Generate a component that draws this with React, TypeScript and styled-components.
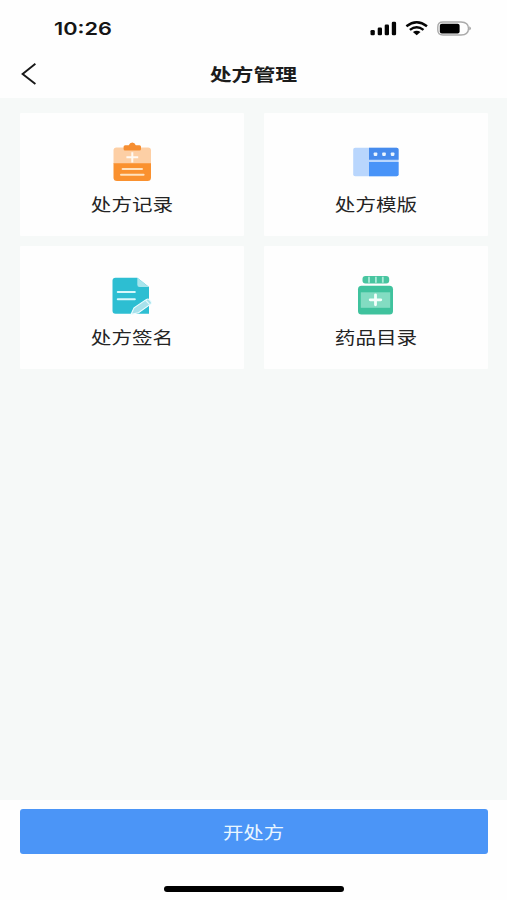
import React from "react";
import styled, { createGlobalStyle } from "styled-components";

const GlobalStyle = createGlobalStyle`
  * { box-sizing: border-box; }
  body { margin: 0; background: #fefefe; }
`;

const Screen = styled.div`
  width: 507px;
  height: 900px;
  display: flex;
  flex-direction: column;
  overflow: hidden;
  background: #fefefe;
  color: #242424;
  font-family: "Noto Sans CJK SC", sans-serif;
`;

const StatusBar = styled.header`
  height: 50px;
  display: flex;
  align-items: center;
  justify-content: space-between;
  padding: 8px 33px 0 54px;
`;

const Time = styled.span`
  font: 600 17.5px/24px Inter, sans-serif;
  color: #151515;
  transform: scaleX(1.24);
  transform-origin: left center;
`;

const NavBar = styled.nav`
  height: 48px;
  display: grid;
  grid-template-columns: 58px 1fr 58px;
  align-items: center;
`;

const BackButton = styled.button`
  width: 58px;
  height: 48px;
  padding: 0;
  border: 0;
  background: none;
  svg { display: block; }
`;

const Title = styled.h1`
  margin: 0;
  text-align: center;
  font-size: 17.5px;
  line-height: 48px;
  font-weight: 700;
  color: #1c1c1c;
  transform: scaleX(1.25);
`;

const Content = styled.main`
  flex: 1;
  display: grid;
  grid-template-columns: 224px 224px;
  grid-auto-rows: 123px;
  align-content: start;
  gap: 10px 20px;
  padding: 15px 20px 0;
  background: #f6f9f8;
`;

const Card = styled.section`
  display: flex;
  flex-direction: column;
  align-items: center;
  padding-top: 27px;
  border-radius: 1px;
  background: #fefefe;
  svg { display: block; flex: none; }
`;

const Label = styled.span`
  margin-top: 6px;
  font-size: 17px;
  line-height: 28px;
  font-weight: 400;
  transform: scaleX(1.21);
`;

const Footer = styled.footer`
  height: 100px;
  display: flex;
  flex-direction: column;
  align-items: center;
  padding-top: 9px;
`;

const PrimaryButton = styled.button`
  width: 468px;
  height: 45px;
  padding: 0;
  border: 0;
  border-radius: 3px;
  background: #4b95f7;
  color: #e9f6ff;
  font: 400 17px/45px "Noto Sans CJK SC", sans-serif;
`;

const ButtonText = styled.span`
  display: inline-block;
  transform: scaleX(1.2);
`;

const HomeBar = styled.div`
  width: 180px;
  height: 6px;
  margin-top: 31.5px;
  border-radius: 3px;
  background: #000;
`;

const StatusIcons = () => (
  <svg width="104" height="20" viewBox="0 0 104 20">
    <g fill="#050505">
      <rect x="0.5" y="11" width="4.3" height="5.2" rx="1.3" />
      <rect x="7.7" y="8.5" width="4.3" height="7.7" rx="1.3" />
      <rect x="14.7" y="5.5" width="4.3" height="10.7" rx="1.3" />
      <rect x="21.8" y="2.8" width="4.3" height="13.4" rx="1.3" />
      <path d="M46.7 16.3 42.9 13.1Q46.7 10.2 50.5 13.1Z" />
    </g>
    <g fill="none" stroke="#050505" strokeWidth="2.4">
      <path d="M36.4 7.2Q46.7-.8 57 7.2" />
      <path d="M39.9 10.9Q46.7 5.4 53.5 10.9" />
    </g>
    <path d="M73 3H91Q98.5 3.2 98.5 9.4T91 16H73Q67.8 16 67.8 11V8Q67.8 3 73 3Z" fill="#fefefe" stroke="#aaa" strokeWidth="1.4" />
    <rect x="69.8" y="4.8" width="19.8" height="9.6" rx="2" fill="#000" />
    <path d="M99.2 7.2Q103 9.4 99.2 11.6Z" fill="#aaa" />
  </svg>
);

const BackIcon = () => (
  <svg width="58" height="48" viewBox="0 0 58 48">
    <path d="M35.4 13.8 22.6 24 35.4 34" fill="none" stroke="#181818" strokeWidth="1.9" />
  </svg>
);

const RecordIcon = () => (
  <svg width="48" height="44" viewBox="0 0 48 44">
    <path d="M8.5 7.4H40Q43 7.4 43 10.5V24H5.5V10.5Q5.5 7.4 8.5 7.4Z" fill="#fdcfa5" />
    <path d="M5.5 23.3H43V37.5Q43 41 39.5 41H9Q5.5 41 5.5 37.5Z" fill="#fa912f" />
    <path d="M17.2 5.2H20.8Q21.8 2.4 24.3 2.4T27.8 5.2H31.5Q33 5.2 33 6.7V9Q33 10.6 31.5 10.6H17Q15.6 10.6 15.6 9V6.7Q15.6 5.2 17.2 5.2Z" fill="#f68e31" />
    <path d="M24.3 12.2V22.5M18.4 17.3H30.2" stroke="#fff9f2" strokeWidth="2" />
    <path d="M14.6 29H34M13 34.8H35.6" stroke="#ffe2bf" strokeWidth="2" strokeLinecap="round" />
  </svg>
);

const TemplateIcon = () => (
  <svg width="48" height="44" viewBox="0 0 48 44">
    <rect x="1.2" y="7.8" width="45.4" height="28.4" rx="2" fill="#b9d6fd" />
    <path d="M17 7.8H44.6Q46.6 7.8 46.6 9.8V19.8H17Z" fill="#468bed" />
    <path d="M17 22H46.6V34.2Q46.6 36.2 44.6 36.2H17Z" fill="#4893f8" />
    <g fill="#eaf5ff">
      <rect x="21.7" y="12.5" width="3.6" height="3.4" rx="0.8" />
      <rect x="30.2" y="12.5" width="3.6" height="3.4" rx="0.8" />
      <rect x="38.8" y="12.5" width="3.6" height="3.4" rx="0.8" />
    </g>
  </svg>
);

const SignatureIcon = () => (
  <svg width="48" height="44" viewBox="0 0 48 44">
    <path d="M7.5 4.8H29.3L41 14V40.8H7.5Q4.5 40.8 4.5 37.8V7.8Q4.5 4.8 7.5 4.8Z" fill="#2dbed2" />
    <path d="M29.3 4.8 41 14H31.5Q29.3 14 29.3 11.8Z" fill="#a8e5ec" />
    <path d="M9.8 19H26.8M9.8 26.2H26.8" stroke="#d8f8fb" strokeWidth="2.1" strokeLinecap="round" />
    <path d="M23 41.4 26 34.8 38.5 26.4Q40.6 25.2 42.6 27.8T42.3 31.4L30.5 39.8Z" fill="#a7e1eb" stroke="#effdff" strokeWidth="1.1" />
    <path d="M37.5 27.2 41.7 31.7" stroke="#e5f9fb" strokeWidth="1.2" />
  </svg>
);

const MedicineIcon = () => (
  <svg width="48" height="44" viewBox="0 0 48 44">
    <rect x="10.5" y="3" width="26.7" height="7.4" rx="3" fill="#48c5a0" />
    <path d="M17 3.7V9.7M23.9 3.7V9.7M30.8 3.7V9.7" stroke="#a9ead7" strokeWidth="1.8" />
    <rect x="6" y="12.8" width="35" height="28.6" rx="3.5" fill="#3fc29d" />
    <rect x="8.8" y="19.3" width="29.4" height="15.5" fill="#83dcc2" />
    <path d="M23.5 21.8V31.8M18.2 26.8H28.8" stroke="#f3fffb" strokeWidth="2.8" strokeLinecap="round" />
  </svg>
);

const entries = [
  { label: "处方记录", Icon: RecordIcon },
  { label: "处方模版", Icon: TemplateIcon },
  { label: "处方签名", Icon: SignatureIcon },
  { label: "药品目录", Icon: MedicineIcon },
];

export default function App() {
  return (
    <>
      <GlobalStyle />
      <Screen>
        <StatusBar>
          <Time>10:26</Time>
          <StatusIcons />
        </StatusBar>
        <NavBar>
          <BackButton aria-label="返回"><BackIcon /></BackButton>
          <Title>处方管理</Title>
        </NavBar>
        <Content>
          {entries.map(({ label, Icon }) => (
            <Card key={label}>
              <Icon />
              <Label>{label}</Label>
            </Card>
          ))}
        </Content>
        <Footer>
          <PrimaryButton><ButtonText>开处方</ButtonText></PrimaryButton>
          <HomeBar />
        </Footer>
      </Screen>
    </>
  );
}
